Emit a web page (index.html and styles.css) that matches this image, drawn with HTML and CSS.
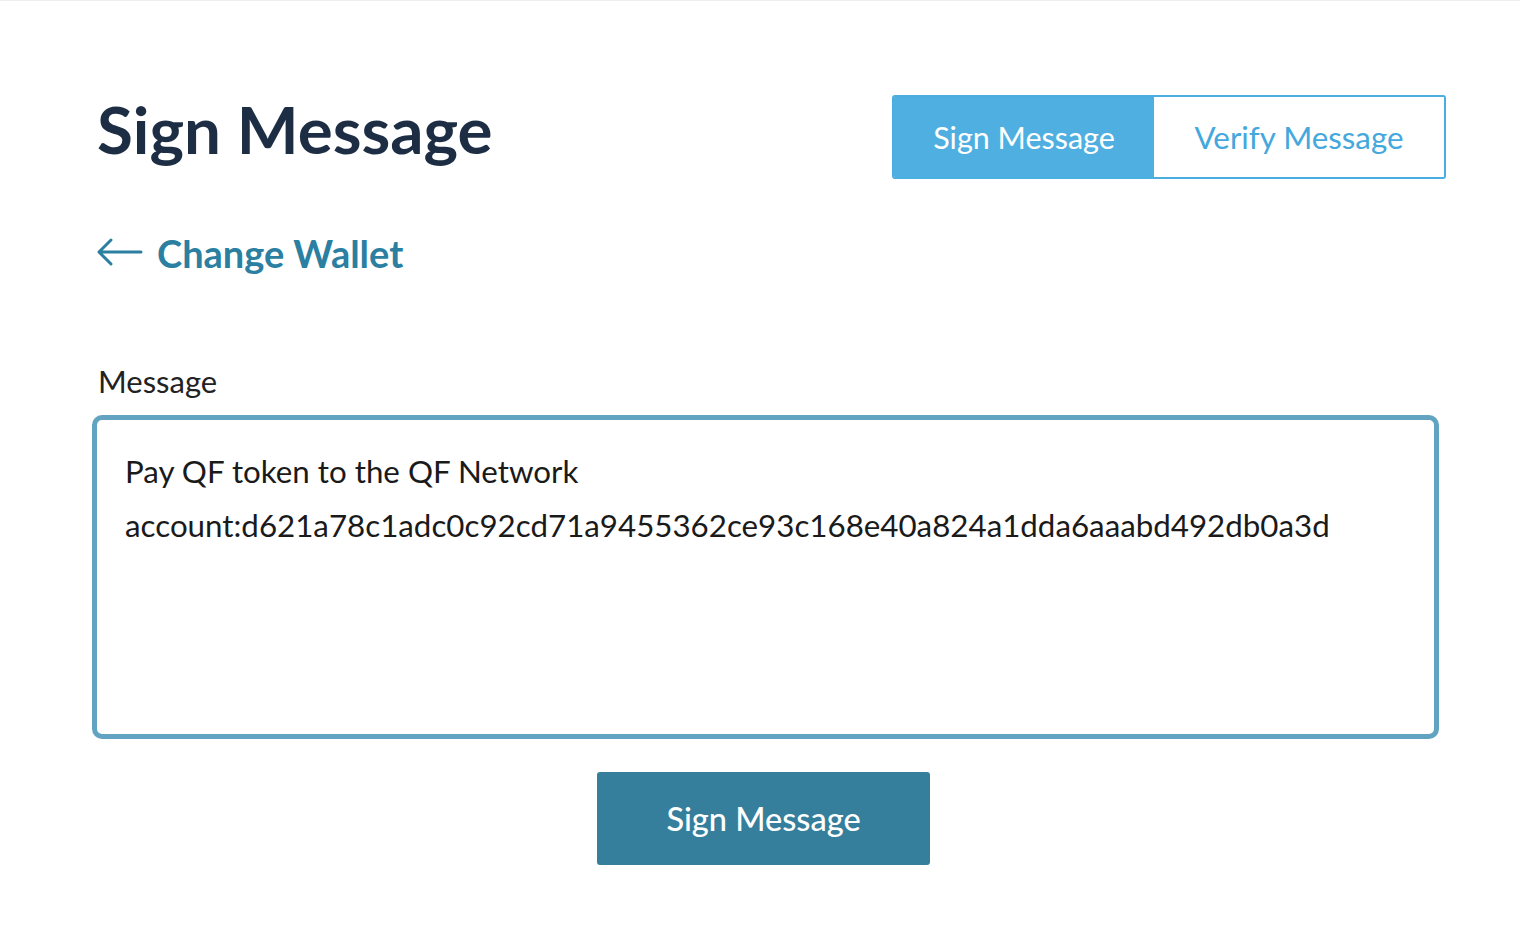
FILE: index.html
```html
<!DOCTYPE html>
<html lang="en">
<head>
<meta charset="utf-8">
<title>Sign Message</title>
<link rel="stylesheet" href="styles.css">
</head>
<body>
<main class="page">
  <header class="head">
    <h1 class="title">Sign Message</h1>
    <nav class="tabs">
      <a class="tab tab-active" href="#">Sign Message</a>
      <a class="tab tab-verify" href="#">Verify Message</a>
    </nav>
  </header>
  <a class="back" href="#">
    <svg class="back-icon" width="46" height="28" viewBox="0 0 46 28" fill="none" stroke="currentColor" stroke-width="3" stroke-linecap="round" stroke-linejoin="round"><path d="M44 14H3M14 2L2 14l12 12"/></svg>
    <span>Change Wallet</span>
  </a>
  <label class="label" for="msg">Message</label>
  <div class="field" id="msg">
    <p class="line">Pay QF token to the QF Network</p>
    <p class="line">account:d621a78c1adc0c92cd71a9455362ce93c168e40a824a1dda6aaabd492db0a3d</p>
  </div>
  <div class="actions">
    <button class="submit" type="button">Sign Message</button>
  </div>
</main>
</body>
</html>
```

FILE: styles.css
```css
html, body {
  margin: 0;
  padding: 0;
  background: #ffffff;
}
body {
  font-family: Lato, "Open Sans", sans-serif;
  border-top: 1px solid #eeeff3;
}
.page {
  padding: 0 74px 0 92px;
}
.head {
  display: flex;
  justify-content: space-between;
  align-items: flex-start;
  padding-top: 90px;
}
.title {
  margin: 2px 0 0 5px;
  font-size: 65.5px;
  line-height: 72px;
  font-weight: 700;
  color: #1d2e44;
}
.tabs {
  display: flex;
  margin-top: 4px;
  border: 2px solid #4aaee0;
  border-radius: 3px;
  height: 80px;
  overflow: hidden;
}
.tab {
  display: flex;
  align-items: center;
  justify-content: center;
  font-size: 30.5px;
  white-space: nowrap;
  color: #45a8dc;
  text-decoration: none;
  background: #ffffff;
}
.tab-active {
  width: 260px;
  background: #4fafe1;
  color: #ffffff;
}
.tab-verify {
  width: 290px;
  font-size: 31.3px;
}
.back {
  display: inline-flex;
  align-items: center;
  gap: 14px;
  margin: 51px 0 0 5px;
  color: #2b7fa1;
  text-decoration: none;
  font-size: 38px;
  font-weight: 700;
  line-height: 46px;
}
.back-icon {
  display: block;
  margin-top: -2px;
}
.label {
  display: block;
  margin: 90px 0 0 6px;
  font-size: 31px;
  line-height: 31px;
  color: #222222;
}
.field {
  margin: 18px 7px 0 0;
  height: 324px;
  box-sizing: border-box;
  border: 5px solid #62a3c1;
  border-radius: 10px;
  padding: 24px 28px;
}
.line {
  margin: 0;
  font-size: 31.3px;
  line-height: 54px;
  color: #1a1a1a;
  white-space: nowrap;
}
.actions {
  display: flex;
  justify-content: center;
  margin: 33px 11px 0 0;
}
.submit {
  width: 333px;
  height: 93px;
  border: none;
  border-radius: 3px;
  background: #357f9d;
  color: #ffffff;
  font-family: Lato, "Open Sans", sans-serif;
  font-size: 32.5px;
  font-weight: 500;
}
```
